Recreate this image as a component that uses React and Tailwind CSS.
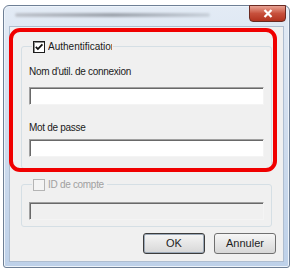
import React from 'react';

const Checkbox = ({ checked, disabled }) => (
  <span
    className={`inline-block w-[12px] h-[12px] border shrink-0 relative ${
      disabled
        ? 'border-[#b4b4b4] bg-[#f4f4f4]'
        : 'border-[#1c1c1c] bg-white shadow-[inset_1px_1px_0_#8e8f8f]'
    }`}
  >
    {checked && (
      <svg viewBox="0 0 10 10" className="absolute left-0 top-0 w-[10px] h-[10px]">
        <path d="M1.8 4.8 L3.9 7 L8.4 2.3" fill="none" stroke="#111" strokeWidth="1.8" />
      </svg>
    )}
  </span>
);

const TextBox = ({ disabled }) => (
  <div
    className={`h-[18px] border-t border-l border-t-[#a0a0a0] border-l-[#a0a0a0] border-r border-b border-r-[#f4f4f4] border-b-[#f4f4f4] shadow-[inset_1px_1px_0_#696969] ${
      disabled ? 'bg-[#f0f0f0]' : 'bg-white'
    }`}
  />
);

const Button = ({ children, isDefault }) => (
  <button
    type="button"
    className={`w-[62px] h-[21px] rounded-[3px] border text-[11px] text-[#1e1e1e] bg-gradient-to-b from-[#f6f6f6] via-[#e6e6e6] to-[#d7d7d7] ${
      isDefault ? 'border-[#3c3c3c] shadow-[inset_0_0_0_1px_#9ca9b8]' : 'border-[#707070]'
    }`}
  >
    {children}
  </button>
);

export default function App() {
  return (
    <div className="w-[293px] h-[270px] bg-white pt-[5px] pl-[3px] relative font-['Liberation_Sans',Arial,sans-serif] text-[10px] text-[#1a1a1a]">
      <div className="w-[287px] h-[263px] rounded-t-[6px] rounded-b-[3px] border border-[#6e7f95] bg-gradient-to-b from-[#e3ebf5] via-[#cfdced] to-[#bed1e9] flex flex-col shadow-[inset_0_0_0_1px_#eef4fb]">
        {/* title bar */}
        <div className="h-[20px] flex items-start justify-between pl-[11px] pr-[3px]">
          <div className="mt-[7px] w-[195px] h-[4px] rounded-full bg-gradient-to-r from-[#b8bcc4] via-[#8d939c] to-[#c4ccd6] blur-[1px] opacity-80" />
          <div className="w-[37px] h-[17px] -mt-px rounded-b-[4px] border border-[#6a2a22] bg-gradient-to-b from-[#e8a293] via-[#c7503c] to-[#b2311d] flex items-center justify-center">
            <svg viewBox="0 0 10 9" className="w-[10px] h-[9px]">
              <path d="M1.5 1 L8.5 8 M8.5 1 L1.5 8" stroke="#fff" strokeWidth="2.2" />
            </svg>
          </div>
        </div>

        {/* client area */}
        <div className="flex-1 mx-[5px] mb-[5px] bg-[#f0f0f0] border border-[#aebdd0] flex flex-col">
          <fieldset className="mx-[11px] mt-[13px] border border-[#d5dfe5] rounded-[3px] px-[7px] pb-[11px]">
            <legend className="ml-[3px] px-[1px] h-[13px] flex items-center gap-[3px]">
              <Checkbox checked />
              <span className="w-[64px] overflow-hidden whitespace-nowrap">Authentification</span>
            </legend>
            <div className="mt-[13px] h-[12px] leading-[12px] tracking-[-0.3px]">Nom d'util. de connexion</div>
            <div className="mt-[9px]">
              <TextBox />
            </div>
            <div className="mt-[17px] h-[12px] leading-[12px] tracking-[-0.3px]">Mot de passe</div>
            <div className="mt-[5px]">
              <TextBox />
            </div>
          </fieldset>

          <fieldset className="mx-[11px] mt-[9px] border border-[#d5dfe5] rounded-[3px] px-[7px] pb-[6px]">
            <legend className="ml-[3px] px-[1px] h-[13px] flex items-center gap-[3px]">
              <Checkbox disabled />
              <span className="text-[#a0a0a0] tracking-[-0.3px] pr-[2px]">ID de compte</span>
            </legend>
            <div className="mt-[11px]">
              <TextBox disabled />
            </div>
          </fieldset>

          <div className="mt-[6px] pr-[7px] flex justify-end gap-[9px]">
            <Button isDefault>OK</Button>
            <Button>Annuler</Button>
          </div>
        </div>
      </div>

      {/* red highlight annotation */}
      <div className="absolute left-[9px] top-[28px] w-[268px] h-[144px] border-[4px] border-[#f00000] rounded-[11px] pointer-events-none" />
    </div>
  );
}
